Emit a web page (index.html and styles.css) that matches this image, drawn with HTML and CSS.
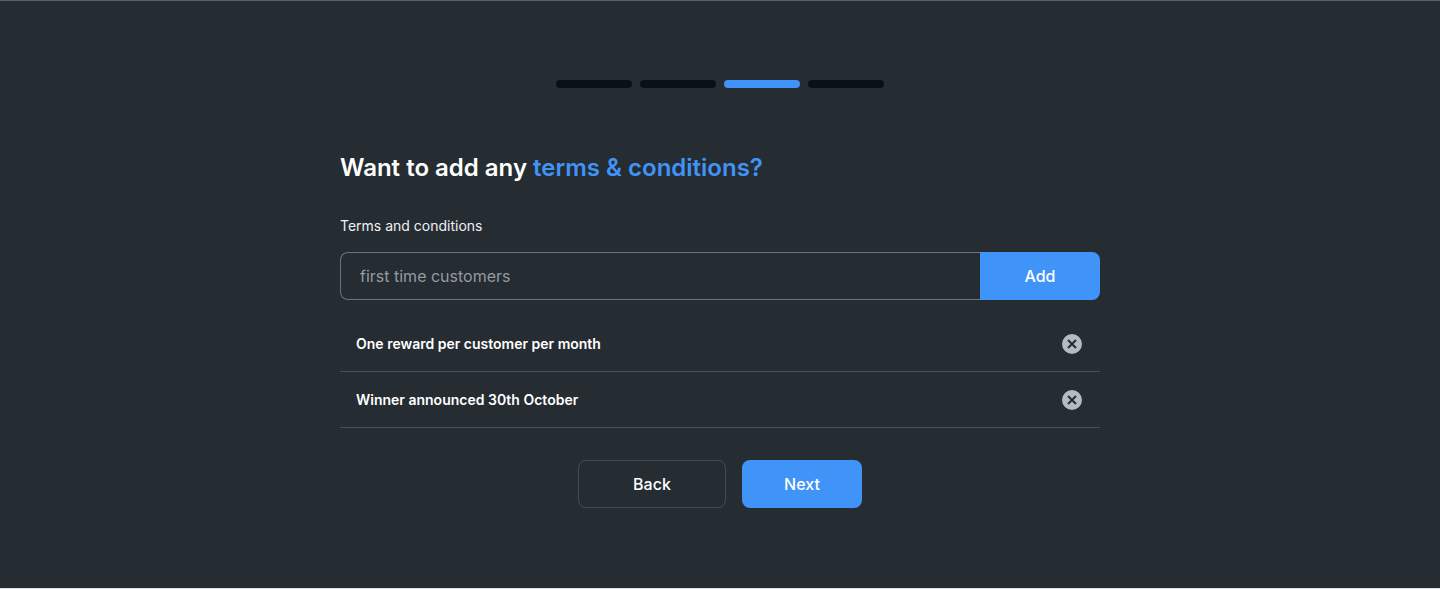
FILE: index.html
```html
<!DOCTYPE html>
<html lang="en">
<head>
<meta charset="utf-8">
<meta name="viewport" content="width=device-width, initial-scale=1">
<title>Terms and conditions</title>
<link rel="stylesheet" href="styles.css">
</head>
<body>
<main class="page">
  <ol class="steps" aria-label="Progress">
    <li class="step"></li>
    <li class="step"></li>
    <li class="step step-current" aria-current="step"></li>
    <li class="step"></li>
  </ol>
  <form class="form">
    <h1 class="title">Want to add any <span class="accent">terms &amp; conditions?</span></h1>
    <label class="label" for="term">Terms and conditions</label>
    <div class="field">
      <input class="input" id="term" type="text" placeholder="first time customers">
      <button class="button primary add" type="button">Add</button>
    </div>
    <ul class="terms">
      <li class="term">
        <span>One reward per customer per month</span>
        <button class="remove" type="button" aria-label="Remove One reward per customer per month">
          <svg class="icon" viewBox="0 0 20 20" aria-hidden="true"><circle cx="10" cy="10" r="10" fill="#b3bbc3"/><path d="M6 6l8 8M14 6l-8 8" stroke="#252c32" stroke-width="2"/></svg>
        </button>
      </li>
      <li class="term">
        <span>Winner announced 30th October</span>
        <button class="remove" type="button" aria-label="Remove Winner announced 30th October">
          <svg class="icon" viewBox="0 0 20 20" aria-hidden="true"><circle cx="10" cy="10" r="10" fill="#b3bbc3"/><path d="M6 6l8 8M14 6l-8 8" stroke="#252c32" stroke-width="2"/></svg>
        </button>
      </li>
    </ul>
    <div class="actions">
      <button class="button secondary" type="button">Back</button>
      <button class="button primary" type="submit">Next</button>
    </div>
  </form>
</main>
</body>
</html>
```
FILE: styles.css
```css
* {
  box-sizing: border-box;
}

body {
  margin: 0;
  background: #252c32;
  color: #fff;
  font-family: Inter, "Liberation Sans", sans-serif;
}

.page {
  display: flex;
  flex-direction: column;
  align-items: center;
  gap: 64px;
  min-height: 100vh;
  padding: 79px 24px;
  border-top: 1px solid #56606a;
  border-bottom: 1px solid #dfe2e4;
}

.steps {
  display: flex;
  gap: 8px;
  width: 100%;
  max-width: 328px;
  margin: 0;
  padding: 0;
  list-style: none;
}

.step {
  flex: 1;
  height: 8px;
  border-radius: 4px;
  background: #081018;
}

.step-current {
  background: #4094f7;
}

.form {
  width: 100%;
  max-width: 760px;
}

.title {
  margin: 0 0 32px;
  font-size: 24px;
  font-weight: 600;
  line-height: 32px;
}

.accent {
  color: #4094f7;
}

.label {
  display: block;
  margin-bottom: 16px;
  color: #eef0f2;
  font-size: 14px;
  line-height: 20px;
}

.field {
  display: flex;
}

.input {
  flex: 1;
  min-width: 0;
  height: 48px;
  padding: 0 19px;
  border: 1px solid #6a737b;
  border-right: 0;
  border-radius: 8px 0 0 8px;
  background: transparent;
  color: #fff;
  font: 400 16px/24px Inter, "Liberation Sans", sans-serif;
}

.input::placeholder {
  color: #939ba3;
  opacity: 1;
}

.button {
  min-width: 120px;
  height: 48px;
  border: 0;
  border-radius: 8px;
  color: #fff;
  font: 500 16px/24px Inter, "Liberation Sans", sans-serif;
  cursor: pointer;
}

.primary {
  background: #4094f7;
}

.add {
  border-radius: 0 8px 8px 0;
}

.secondary {
  min-width: 148px;
  border: 1px solid #434c55;
  background: transparent;
}

.terms {
  margin: 16px 0 32px;
  padding: 0;
  list-style: none;
}

.term {
  display: flex;
  align-items: center;
  justify-content: space-between;
  height: 56px;
  padding: 0 18px 0 16px;
  border-bottom: 1px solid #48515a;
  font-size: 14px;
  font-weight: 600;
  line-height: 20px;
}

.remove {
  padding: 0;
  border: 0;
  background: none;
  cursor: pointer;
}

.icon {
  display: block;
  width: 20px;
  height: 20px;
}

.actions {
  display: flex;
  justify-content: center;
  gap: 16px;
}
```
